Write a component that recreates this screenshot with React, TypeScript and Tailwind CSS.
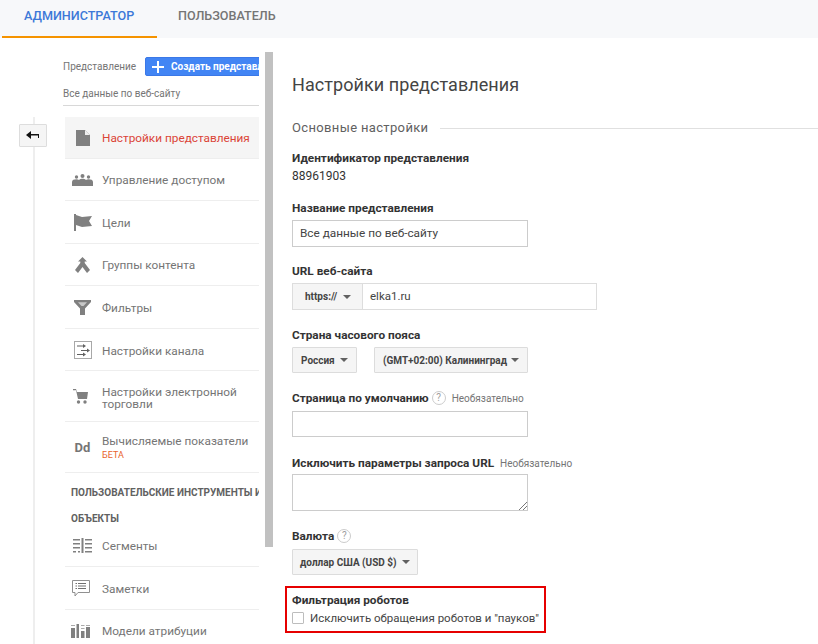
import React from "react";

const Row = ({ h, icon, children, active, low }: { h: string; icon: React.ReactNode; children: React.ReactNode; active?: boolean; low?: boolean }) => (
  <div className={`${h} flex items-center border-b border-[#eeeeee] ${active ? "bg-[#f5f5f5]" : ""}`}>
    <div className="w-[37px] pr-[2px] flex justify-center shrink-0 text-[#808080]">{icon}</div>
    <div className={`text-[11.8px] leading-[12px] whitespace-nowrap ${low ? "pt-[3px]" : "pt-[1px]"} ${active ? "text-[#db4437]" : "text-[#757575]"}`}>{children}</div>
  </div>
);

const G = "#808080";
const Caret = () => <svg width="8" height="4" viewBox="0 0 8 4" className="shrink-0"><path d="M0 0h8L4 4z" fill="#616161" /></svg>;
const Q = () => (
  <span className="inline-flex w-[14px] h-[14px] rounded-full border border-[#cccccc] text-[#9e9e9e] text-[10px] leading-none items-center justify-center font-normal">?</span>
);
const Sel = ({ w, children, px }: { w: string; children: React.ReactNode; px: string }) => (
  <div className={`${w} ${px} h-[26px] flex items-center justify-between border border-[#dcdcdc] bg-[#f5f5f5] rounded-[1px] text-[10px] font-bold text-[#444444] whitespace-nowrap`}>
    <span>{children}</span>
    <Caret />
  </div>
);
const Label = ({ children }: { children: React.ReactNode }) => <div className="text-[11.8px] leading-[14px] font-bold text-[#333333] whitespace-nowrap">{children}</div>;

export default function App() {
  return (
    <div className="w-[818px] h-[644px] overflow-hidden bg-white font-['Roboto',sans-serif]">
      <div className="h-[38px] bg-[#f7f8fa] flex pl-[2px]">
        <div className="w-[155px] h-[38px] border-b-2 border-[#f59300] pl-[22px] pt-[8px] text-[12.6px] leading-[15px] font-medium text-[#3d78d8]">АДМИНИСТРАТОР</div>
        <div className="pl-[21px] pt-[8px] text-[12.6px] leading-[15px] font-medium text-[#757575]">ПОЛЬЗОВАТЕЛЬ</div>
      </div>
      <div className="flex h-[606px]">
        <div className="w-[19px] shrink-0" />
        <div className="w-[28px] shrink-0 relative flex flex-col items-center">
          <div className="absolute left-[14px] top-[79px] bottom-0 w-[2px] bg-[#eeeeee]" />
          <div className="relative mt-[86px] w-[28px] h-[23px] bg-[#f5f5f5] border border-[#dddddd] rounded-[1px] flex items-center justify-center">
            <svg width="14" height="10" viewBox="0 0 14 10"><path d="M5 0v3h8v4h-1V4.500H5V8L0 4z" fill="#111" /></svg>
          </div>
        </div>
        <div className="w-[16px] shrink-0" />
        <div className="w-[196px] shrink-0 overflow-hidden pt-[12px]">
          <div className="h-[56px] border-b border-[#d8d8d8] mb-[11px] pt-[7px] w-[196px]">
            <div className="flex items-center h-[19px]">
              <span className="text-[10px] leading-[12px] text-[#757575] w-[82px] shrink-0">Представление</span>
              <div className="w-[120px] shrink-0 h-[19px] bg-[#4285f4] border border-[#3b78e7] rounded-[2px] flex items-center text-white text-[10px] font-bold whitespace-nowrap overflow-hidden">
                <svg width="12" height="12" viewBox="0 0 12 12" className="ml-[6px] mr-[7px] shrink-0"><path d="M5 0h2v5h5v2H7v5H5V7H0V5h5z" fill="#fff" /></svg>
                Создать представление
              </div>
            </div>
            <div className="text-[10px] leading-[12px] text-[#757575] mt-[12px]">Все данные по веб-сайту</div>
          </div>
          <div className="pl-[2px]">
            <Row h="h-[42px]" active icon={<svg width="14" height="16" viewBox="0 0 14 16"><path d="M0 0h9l5 5v11H0z" fill={G} /><path d="M9 0v5h5z" fill="#eee" /></svg>}>Настройки представления</Row>
            <Row h="h-[42px]" icon={<svg width="21" height="12" viewBox="0 0 21 12" fill={G}><circle cx="4.500" cy="3" r="1.700" /><circle cx="10.500" cy="2" r="2" /><circle cx="16.500" cy="3" r="1.700" /><path d="M0 8c0-2 2-2.700 4.500-2.700 1 0 2 .2 2.600.6C8 5 9.200 4.800 10.500 4.800s2.500.2 3.400 1.100c.6-.4 1.600-.6 2.600-.6C19 5.300 21 6 21 8v4H0z" /></svg>}>Управление доступом</Row>
            <Row h="h-[43px]" icon={<svg width="18" height="17" viewBox="0 0 18 17" fill={G}><path d="M0 0h2v17H0zM2 1l6 2 10-1-3 5 3 5-10 1-6-2z" /></svg>}>Цели</Row>
            <Row h="h-[42px]" icon={<svg width="15" height="16" viewBox="0 0 15 16" fill={G}><path d="M7.500 0 12 4.500H9.700V6l5.300 7-3 3-4.500-6L3 16l-3-3 5.300-7V4.500H3z" /></svg>}>Группы контента</Row>
            <Row h="h-[43px]" icon={<svg width="17" height="15" viewBox="0 0 17 15" fill={G}><path d="M0 0h17v2l-6 6.500V15H6V8.500L0 2z" /><path d="M4 2.200h9L9.500 6h-2z" fill="#c8c8c8" /></svg>}>Фильтры</Row>
            <Row h="h-[42px]" low icon={<svg width="18" height="18" viewBox="0 0 18 18" fill="none"><rect x=".5" y=".5" width="17" height="17" stroke="#a8a8a8" /><path d="M3 5h6M7 9.500h7M3 13.500h6" stroke="#606060" strokeWidth="1.200" /><path d="M9 3l3 2-3 2zM13 7.500l3 2-3 2zM9 11.500l3 2-3 2z" fill="#606060" /></svg>}>Настройки канала</Row>
            <Row h="h-[51px]" low icon={<svg width="15" height="15" viewBox="0 0 15 15" fill={G} className="mr-[5px]"><path d="M0 0h3l1 3h11l-1 7H5L3 1.200H0z" /><circle cx="5.500" cy="13" r="1.700" /><circle cx="12" cy="13" r="1.700" /></svg>}><div>Настройки электронной<br />торговли</div></Row>
            <Row h="h-[51px]" icon={<span className="text-[13px] font-bold text-[#757575] leading-none">Dd</span>}><div>Вычисляемые показатели<div className="text-[9px] leading-[10px] text-[#e8622c] mt-[3px]">БЕТА</div></div></Row>
            <div className="pl-[6px] pt-[7px] -mb-[7px] text-[10px] font-bold leading-[26px] text-[#616161] whitespace-nowrap">ПОЛЬЗОВАТЕЛЬСКИЕ ИНСТРУМЕНТЫ И<br />ОБЪЕКТЫ</div>
            <Row h="h-[42px]" icon={<svg width="19" height="15" viewBox="0 0 19 15" fill={G}><path d="M8.500 0h2v15h-2zM0 1h7v1.500H0zM0 5h7v1.500H0zM0 9h7v1.500H0zM0 13h3v1.500H0zM5 13h2v1.500H5zM12 1h7v1.500h-7zM12 5h7v1.500h-7zM12 9h7v1.500h-7zM12 13h7v1.500h-7z" /></svg>}>Сегменты</Row>
            <Row h="h-[43px]" icon={<svg width="18" height="17" viewBox="0 0 18 17" fill="none" className="mr-[3px]"><path d="M.5.500h17v12H6L3 16v-3.500H.5z" stroke="#909090" /><path d="M3.500 3.500h1.500M6 3.500h8M3.500 6h1.500M6 6h8M3.500 8.500h1.500M6 8.500h8" stroke="#707070" /></svg>}>Заметки</Row>
            <Row h="h-[42px]" icon={<svg width="19" height="14" viewBox="0 0 19 14" fill={G} className="mr-[5px]"><path d="M0 4h4v10H0zM5.500 0h2.500v14H5.500zM10 7h3.500v7H10zM15 3h4v11h-4z" /><path d="M0 1h4v1H0zM10 1h3.500v1H10zM10 4h3.500v1H10zM15 1h4v1h-4z" fill="#aaa" /></svg>}>Модели атрибуции</Row>
          </div>
        </div>
        <div className="w-[6px] shrink-0" />
        <div className="w-[8px] h-[495px] mt-[14px] bg-[#c1c1c1] shrink-0" />
        <div className="w-[19px] shrink-0" />
        <div className="flex-1 min-w-0">
          <div className="text-[18px] leading-[22px] tracking-[0.07px] text-[#444444] mt-[36px]">Настройки представления</div>
          <div className="flex items-center mt-[24px] gap-[12px]">
            <span className="text-[13px] leading-[16px] text-[#616161] tracking-[0.35px] whitespace-nowrap">Основные настройки</span>
            <div className="flex-1 h-px bg-[#e0e0e0]" />
          </div>
          <div className="mt-[15px]"><Label>Идентификатор представления</Label></div>
          <div className="text-[12px] leading-[14px] text-[#333333] mt-[4px]">88961903</div>
          <div className="mt-[18px]"><Label>Название представления</Label></div>
          <div className="mt-[5px] w-[236px] h-[27px] border border-[#cccccc] flex items-center pl-[7px] text-[11.8px] text-[#444444]">Все данные по веб-сайту</div>
          <div className="mt-[17px]"><Label>URL веб-сайта</Label></div>
          <div className="mt-[5px] w-[305px] h-[27px] border border-[#dddddd] flex items-center">
            <div className="w-[70px] h-full bg-[#f5f5f5] border-r border-[#dddddd] flex items-center pl-[12px] gap-[6px] text-[10px] font-bold text-[#444444]">https:// <Caret /></div>
            <div className="pl-[7px] text-[11.5px] text-[#444444]">elka1.ru</div>
          </div>
          <div className="mt-[18px]"><Label>Страна часового пояса</Label></div>
          <div className="mt-[5px] flex gap-[17px]">
            <Sel w="w-[65px]" px="px-[8px]">Россия</Sel>
            <Sel w="w-[154px]" px="px-[8px]">(GMT+02:00) Калининград</Sel>
          </div>
          <div className="mt-[18px] flex items-center h-[14px]">
            <Label>Страница по умолчанию</Label>
            <span className="ml-[3px] flex"><Q /></span>
            <span className="ml-[6px] text-[10px] text-[#757575]">Необязательно</span>
          </div>
          <div className="mt-[6px] w-[236px] h-[26px] border border-[#cccccc]" />
          <div className="mt-[19px] flex items-center h-[14px]">
            <Label>Исключить параметры запроса URL</Label>
            <span className="ml-[6px] text-[10px] text-[#757575]">Необязательно</span>
          </div>
          <div className="mt-[4px] w-[236px] h-[37px] border border-[#cccccc] relative">
            <svg width="9" height="9" viewBox="0 0 9 9" className="absolute right-0 bottom-0"><path d="M1 9 9 1M5 9l4-4" stroke="#777" /></svg>
          </div>
          <div className="mt-[18px] flex items-center h-[14px]">
            <Label>Валюта</Label>
            <span className="ml-[3px] flex"><Q /></span>
          </div>
          <div className="mt-[6px]"><Sel w="w-[126px]" px="px-[7px]">доллар США (USD $)</Sel></div>
          <div className="mt-[11px] -ml-[7px] w-[261px] h-[47px] border-2 border-[#e60000] pl-[5px] pt-[5px]">
            <Label>Фильтрация роботов</Label>
            <div className="flex items-center mt-[4px] gap-[6px] h-[14px]">
              <div className="w-[12px] h-[12px] shrink-0 border border-[#bdbdbd] rounded-[1px]" />
              <span className="text-[11.5px] pt-[1px] text-[#444444] whitespace-nowrap">Исключить обращения роботов и "пауков"</span>
            </div>
          </div>
        </div>
      </div>
    </div>
  );
}
